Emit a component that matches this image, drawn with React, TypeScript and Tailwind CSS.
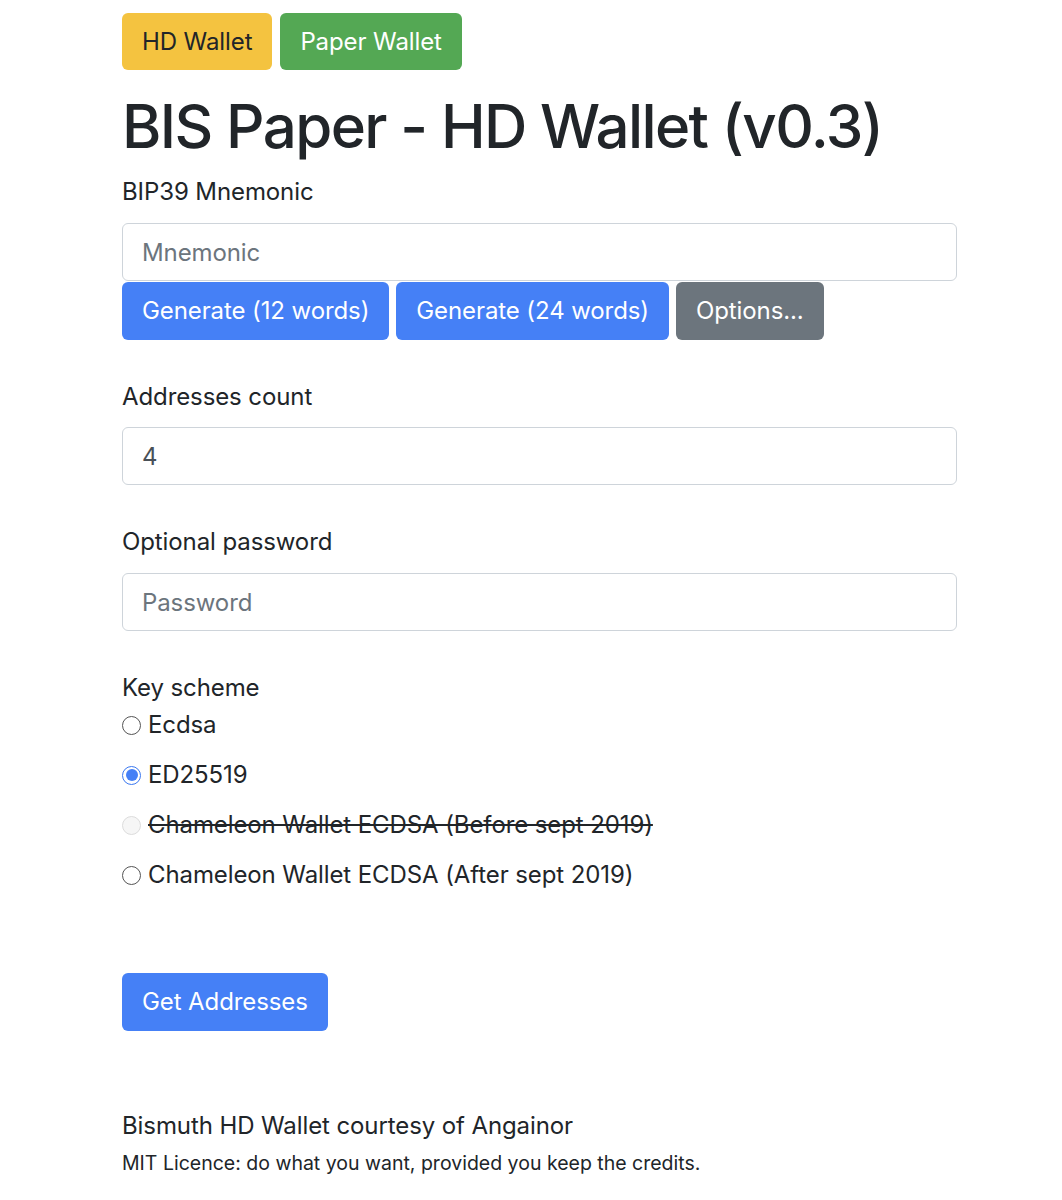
import React, { useState } from "react";

const font = { fontFamily: "Inter, 'Liberation Sans', sans-serif" };

const App: React.FC = () => {
  const [scheme, setScheme] = useState("ed25519");

  const schemes = [
    { id: "ecdsa", label: "Ecdsa", disabled: false },
    { id: "ed25519", label: "ED25519", disabled: false },
    { id: "old", label: "Chameleon Wallet ECDSA (Before sept 2019)", disabled: true },
    { id: "new", label: "Chameleon Wallet ECDSA (After sept 2019)", disabled: false },
  ];

  return (
    <div className="min-h-[1200px] bg-white text-[#212529] tracking-[-0.1px]" style={font}>
      <div className="w-[835px] ml-[122px] pt-[13px]">
        {/* Top switch */}
        <div className="flex gap-[8px]">
          <button className="h-[57px] px-[20px] rounded-[6px] bg-[#f4c340] text-[24px] text-[#212529] tracking-[-0.1px]">
            HD Wallet
          </button>
          <button className="h-[57px] px-[20px] rounded-[6px] bg-[#54a854] text-[24px] text-white tracking-[-0.1px]">
            Paper Wallet
          </button>
        </div>

        <h1 className="mt-[20px] text-[60px] leading-[72px] font-medium tracking-[-1.6px]">
          BIS Paper - HD Wallet (v0.3)
        </h1>

        {/* Mnemonic */}
        <div className="mt-[12px] text-[24px] leading-[36px]">BIP39 Mnemonic</div>
        <input
          placeholder="Mnemonic"
          className="mt-[13px] block w-full h-[58px] px-[19px] text-[24px] tracking-[-0.1px] border border-[#ced4da] rounded-[6px] placeholder:text-[#6c757d] outline-none"
        />
        <div className="flex gap-[7px] mt-[1px]">
          <button className="h-[58px] px-[20px] rounded-[6px] bg-[#4580f6] text-white text-[24px] tracking-[-0.1px]">
            Generate (12 words)
          </button>
          <button className="h-[58px] px-[20px] rounded-[6px] bg-[#4580f6] text-white text-[24px] tracking-[-0.1px]">
            Generate (24 words)
          </button>
          <button className="h-[58px] px-[20px] rounded-[6px] bg-[#6c757d] text-white text-[24px] tracking-[-0.1px]">
            Options...
          </button>
        </div>

        {/* Count */}
        <div className="mt-[39px] text-[24px] leading-[36px]">Addresses count</div>
        <input
          defaultValue="4"
          className="mt-[12px] block w-full h-[58px] px-[19px] text-[24px] text-[#495057] border border-[#ced4da] rounded-[6px] outline-none"
        />

        {/* Password */}
        <div className="mt-[39px] text-[24px] leading-[36px]">Optional password</div>
        <input
          placeholder="Password"
          className="mt-[13px] block w-full h-[58px] px-[19px] text-[24px] tracking-[-0.1px] border border-[#ced4da] rounded-[6px] placeholder:text-[#6c757d] outline-none"
        />

        {/* Key scheme */}
        <div className="mt-[39px] text-[24px] leading-[36px]">Key scheme</div>
        <div className="flex flex-col gap-[14px] mt-[1px]">
          {schemes.map((s) => (
            <label key={s.id} className="flex items-center gap-[7px] text-[24px] leading-[36px]">
              <span
                className={
                  s.id === scheme
                    ? "w-[19px] h-[19px] rounded-full border-[1.5px] border-[#3b78f0] bg-white flex items-center justify-center"
                    : s.disabled
                    ? "w-[19px] h-[19px] rounded-full border border-[#dcdcdc] bg-[#f6f6f6]"
                    : "w-[19px] h-[19px] rounded-full border border-[#555] bg-white"
                }
                onClick={() => !s.disabled && setScheme(s.id)}
              >
                {s.id === scheme && <span className="w-[12px] h-[12px] rounded-full bg-[#4580f6]" />}
              </span>
              <span className={s.disabled ? "line-through" : ""}>{s.label}</span>
            </label>
          ))}
        </div>

        <button className="mt-[80px] h-[58px] px-[20px] rounded-[6px] bg-[#4580f6] text-white text-[24px] tracking-[-0.1px]">
          Get Addresses
        </button>

        <div className="mt-[77px] text-[24px] leading-[36px]">
          Bismuth HD Wallet courtesy of Angainor
        </div>
        <div className="mt-[4px] text-[19.5px] leading-[30px] tracking-normal">
          MIT Licence: do what you want, provided you keep the credits.
        </div>
      </div>
    </div>
  );
};

export default App;
